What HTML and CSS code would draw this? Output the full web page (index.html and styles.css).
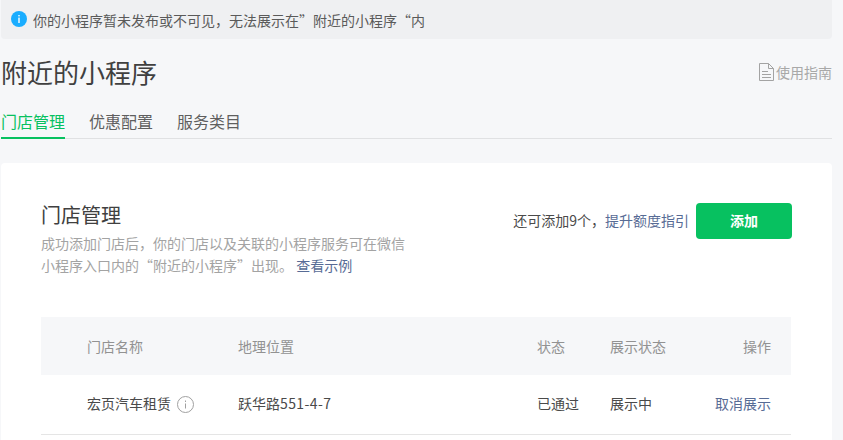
FILE: index.html
```html
<!DOCTYPE html>
<html lang="zh">
<head>
<meta charset="utf-8">
<title>附近的小程序</title>
<link rel="stylesheet" href="styles.css">
</head>
<body>
<main class="page">
  <div class="notice">
    <svg class="notice-icon" width="16" height="16" viewBox="0 0 16 16"><circle cx="8" cy="8" r="8" fill="#1aadff"/><rect x="7.3" y="4" width="1.4" height="1.4" fill="#fff"/><rect x="7.3" y="6.6" width="1.4" height="5.4" fill="#fff"/></svg>
    <span>你的小程序暂未发布或不可见，无法展示在”附近的小程序“内</span>
  </div>
  <header class="head">
    <h1 class="title">附近的小程序</h1>
    <a class="guide">
      <svg width="15" height="18" viewBox="0 0 15 18" fill="none" stroke="#a3a3a3"><path d="M.5.5h9l5 5v12H.5z"/><path d="M9.5.5v5h5M3 8.5h6M3 11.5h9M3 14.5h9"/></svg>
      <span>使用指南</span>
    </a>
  </header>
  <nav class="tabs">
    <a class="tab active">门店管理</a>
    <a class="tab">优惠配置</a>
    <a class="tab">服务类目</a>
  </nav>
  <section class="card">
    <div class="card-top">
      <div class="intro">
        <h2 class="card-title">门店管理</h2>
        <p class="desc">成功添加门店后，你的门店以及关联的小程序服务可在微信<br>小程序入口内的“附近的小程序”出现。 <a class="link">查看示例</a></p>
      </div>
      <div class="actions">
        <span class="quota">还可添加9个，<a class="link">提升额度指引</a></span>
        <button class="add">添加</button>
      </div>
    </div>
    <div class="table">
      <div class="row row-head">
        <div class="c-name">门店名称</div>
        <div class="c-loc">地理位置</div>
        <div class="c-status">状态</div>
        <div class="c-show">展示状态</div>
        <div class="c-op">操作</div>
      </div>
      <div class="row row-body">
        <div class="c-name">宏页汽车租赁
          <svg class="info" width="17" height="17" viewBox="0 0 17 17" fill="none"><circle cx="8.5" cy="8.5" r="8" stroke="#a0a0a0"/><path d="M8.5 4.5v1.5M8.5 7.5v5" stroke="#a0a0a0"/></svg>
        </div>
        <div class="c-loc">跃华路<span class="num">551-4-7</span></div>
        <div class="c-status">已通过</div>
        <div class="c-show">展示中</div>
        <div class="c-op"><a class="link">取消展示</a></div>
      </div>
    </div>
  </section>
</main>
</body>
</html>
```
FILE: styles.css
```css
* { box-sizing: border-box; }
html, body { margin: 0; height: 100%; overflow: hidden; }
body {
  background: #f6f7f9;
  color: #353535;
  font-family: "Noto Sans CJK SC", "Liberation Sans", sans-serif;
  font-size: 14px;
}
.page { width: 832px; height: 440px; padding-left: 1px; overflow: hidden; }
.notice {
  display: flex;
  align-items: center;
  gap: 6px;
  height: 39px;
  padding-left: 10px;
  background: #eff0f2;
  border-radius: 0 0 4px 4px;
  font-size: 14px;
  color: #5a5a5a;
}
.notice-icon { flex: none; margin-top: -1px; }
.head {
  display: flex;
  justify-content: space-between;
  align-items: center;
  height: 68px;
}
.title { margin: -2px 0 0; font-size: 26px; font-weight: 400; color: #404040; line-height: 36px; }
.guide { display: flex; align-items: center; gap: 2px; color: #a8a8a8; font-size: 14px; margin-top: -2px; }
.tabs {
  display: flex;
  gap: 24px;
  height: 32px;
  border-bottom: 1px solid #e0e1e3;
}
.tab { font-size: 16px; line-height: 29px; height: 32px; color: #5f5f5f; }
.tab.active { color: #07c160; border-bottom: 2px solid #07c160; }
.card {
  margin-top: 24px;
  padding: 40px 40px 0;
  background: #fff;
  border-radius: 4px;
  height: 300px;
}
.card-top { display: flex; justify-content: space-between; height: 114px; }
.card-title { margin: 0; font-size: 20px; font-weight: 400; line-height: 23px; color: #404040; }
.desc { margin: 6px 0 0; font-size: 14px; line-height: 22px; color: #a3a3a3; }
.link { color: #576b95; }
.actions { display: flex; align-items: flex-start; gap: 7px; }
.quota { font-size: 14px; line-height: 34px; color: #4a4a4a; }
.add {
  width: 96px;
  height: 36px;
  padding: 0 0 2px;
  border: 0;
  border-radius: 4px;
  background: #07c160;
  color: #fff;
  font: 700 14px "Noto Sans CJK SC", sans-serif;
}
.table { margin-right: 1px; }
.row { display: flex; align-items: center; font-size: 14px; }
.row-head { height: 58px; background: #f6f7f9; color: #929292; }
.row-body { height: 60px; border-bottom: 1px solid #e5e5e5; color: #4a4a4a; }
.row-head > div { margin-top: -1px; }
.row-body > div { margin-top: -3px; }
.c-name { width: 197px; padding-left: 46px; display: flex; align-items: center; gap: 6px; white-space: nowrap; }
.info { margin-top: 3px; }
.c-loc { width: 299px; }
.num { letter-spacing: .4px; }
.c-status { width: 73px; }
.c-show { width: 80px; }
.c-op { flex: 1; text-align: right; padding-right: 20px; }
```
